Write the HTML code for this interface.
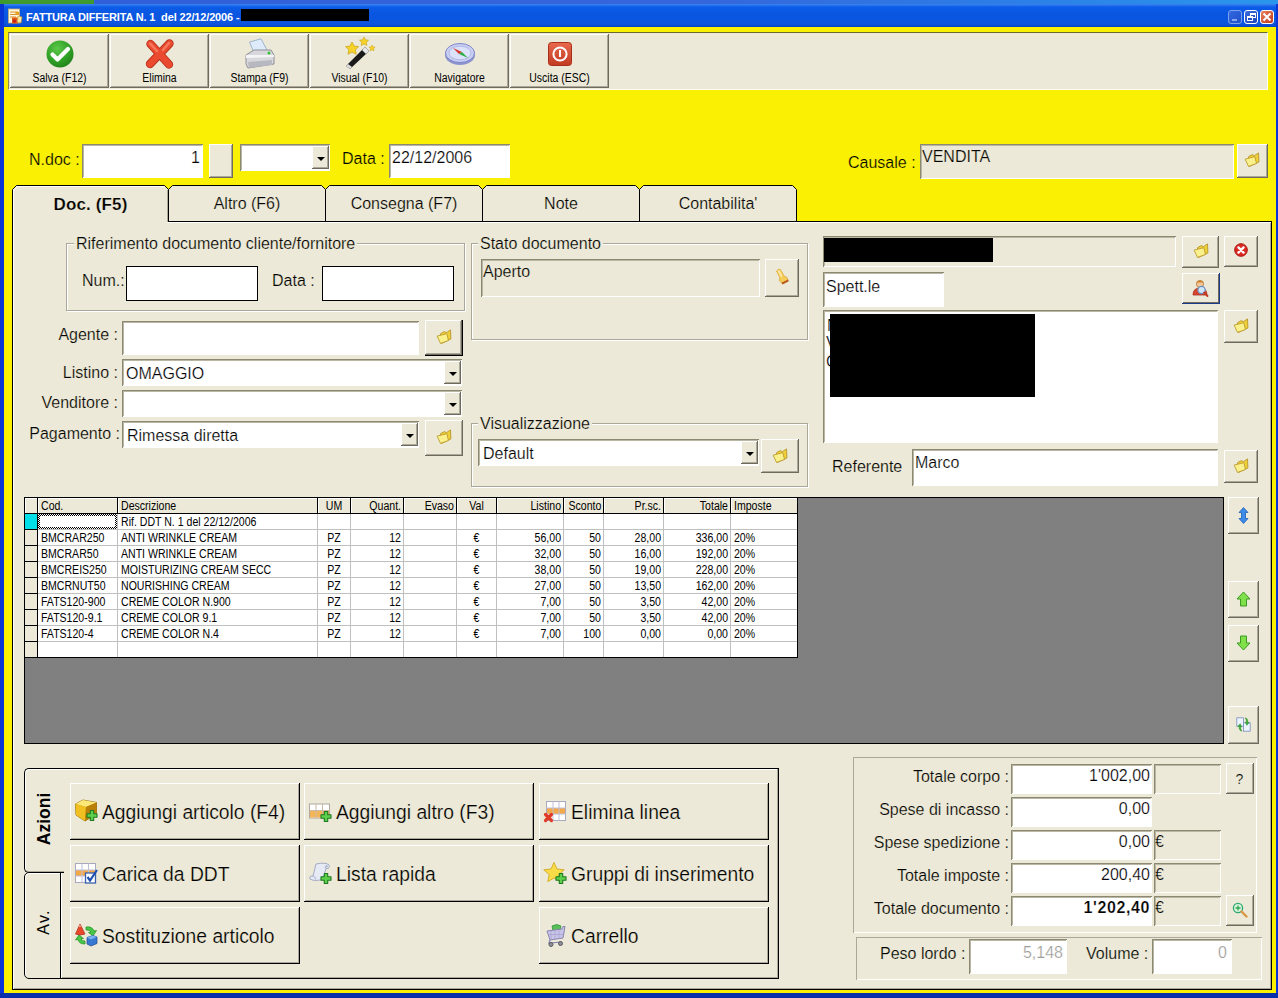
<!DOCTYPE html>
<html>
<head>
<meta charset="utf-8">
<title>FATTURA DIFFERITA</title>
<style>
html,body{margin:0;padding:0;}
body{width:1278px;height:998px;overflow:hidden;position:relative;background:#FAF004;font-family:"Liberation Sans",sans-serif;font-size:16px;color:#000;-webkit-text-stroke:0.22px #ECE9D8;}
.w{-webkit-text-stroke-color:#fff;}
.y{-webkit-text-stroke-color:#FAF004;}
.ns,.g,.tb span{-webkit-text-stroke-width:0 !important;}
.a{position:absolute;box-sizing:border-box;}
.bg{background:#ECE9D8;}
/* raised button */
.btn{position:absolute;box-sizing:border-box;background:#ECE9D8;box-shadow:inset -1px -1px 0 #6E6B5E,inset 1px 1px 0 #FFFFFF,inset -2px -2px 0 #ACA899;}
/* sunken field */
.sk{position:absolute;box-sizing:border-box;background:#fff;box-shadow:inset 1px 1px 0 #8C8973,inset -1px -1px 0 #FFFFFF,inset 2px 2px 0 #B9B6A4;}
.skg{background:#ECE9D8;}
.flat{position:absolute;box-sizing:border-box;background:#fff;border:1px solid #000;}
.lbl{position:absolute;white-space:pre;line-height:20px;height:20px;}
.r{text-align:right;}
.grp{position:absolute;box-sizing:border-box;border:1px solid #ACA899;box-shadow:inset 1px 1px 0 #fff,1px 1px 0 #fff;}
.grp>span{position:absolute;top:-9px;left:6px;background:#ECE9D8;padding:0 2px;line-height:18px;white-space:pre;}
.tb{font-size:12px;}
.tb span{position:absolute;left:0;right:0;top:37px;text-align:center;line-height:14px;transform:scaleX(0.87);white-space:pre;}
.dd{position:absolute;box-sizing:border-box;background:#ECE9D8;box-shadow:inset -1px -1px 0 #6E6B5E,inset 1px 1px 0 #FFFFFF,inset -2px -2px 0 #ACA899;}
.dd:after{content:"";position:absolute;left:50%;top:50%;margin:-1px 0 0 -4px;border:4px solid transparent;border-top:4px solid #000;border-bottom:0;}
.tab{position:absolute;box-sizing:border-box;background:#ECE9D8;border:1px solid #000;border-bottom:0;border-radius:5px 5px 0 0;text-align:center;line-height:33px;}
.g{position:absolute;font-size:12px;line-height:14px;height:14px;white-space:pre;transform:scaleX(0.88);}
.abtn{position:absolute;box-sizing:border-box;width:230px;height:57px;background:#ECE9D8;box-shadow:inset -1px -1px 0 #000,inset 1px 1px 0 #fff,inset -2px -2px 0 #ACA899;}
.abtn svg{display:block;}
</style>
</head>
<body>
<!-- top strip of background windows -->
<div class="a" style="left:0;top:0;width:1278px;height:4px;background:linear-gradient(90deg,#2F5FD9 0,#3566DB 700px,#2C7FE6 1020px,#2A96EC 1278px);"></div>
<div class="a" style="left:0;top:0;width:94px;height:4px;background:#3E9A2E;"></div>
<!-- title bar -->
<div class="a" style="left:0;top:4px;width:1278px;height:23px;background:linear-gradient(180deg,#3D86F2 0,#0C5CE8 3px,#0A56E0 10px,#0B55DF 19px,#0A4FD2 22px,#083CA8 23px);"></div>
<div class="lbl ns" style="left:26px;top:9px;font-size:11px;font-weight:bold;color:#fff;line-height:16px;height:16px;letter-spacing:-0.15px;">FATTURA DIFFERITA N. 1  del 22/12/2006 -</div>
<div class="a" style="left:241px;top:9px;width:128px;height:12px;background:#000;"></div>
<svg class="a" style="left:7px;top:8px" width="16" height="17" viewBox="0 0 16 17"><rect x="1.5" y="1" width="11" height="14" fill="#FFF7D8" stroke="#C8B070" stroke-width="0.8"/><path d="M3 4 h8 M3 6.5 h8 M3 9 h6" stroke="#D89030" stroke-width="1.2"/><path d="M8 4 h4 v3 h-3z" fill="#E8A020"/><rect x="5" y="9.5" width="6" height="6" fill="#E05A18"/><path d="M11 8 L15 9 L14 15 L10 14Z" fill="#F8E8A0" stroke="#C89030" stroke-width="0.6"/><circle cx="7.5" cy="13" r="1.8" fill="#C82818"/></svg>
<!-- caption buttons -->
<div class="a" style="left:1228px;top:10px;width:14px;height:14px;border:1px solid #8FB0F0;border-radius:3px;background:linear-gradient(135deg,#3A6CE0,#2450C8);opacity:0.85;"><div class="a" style="left:3px;top:8px;width:5px;height:2px;background:#9FB8F0;"></div></div>
<div class="a" style="left:1244px;top:10px;width:14px;height:14px;border:1px solid #fff;border-radius:3px;background:linear-gradient(135deg,#3A6CE0,#1C44B8);"><div class="a" style="left:5px;top:2px;width:6px;height:5px;border:1px solid #fff;border-top:2px solid #fff;"></div><div class="a" style="left:2px;top:5px;width:6px;height:5px;border:1px solid #fff;border-top:2px solid #fff;background:#2450C8;"></div></div>
<div class="a" style="left:1260px;top:10px;width:14px;height:14px;border:1px solid #fff;border-radius:3px;background:linear-gradient(135deg,#E8825E,#C03A1A);"><svg class="a" style="left:0;top:0" width="12" height="12" viewBox="0 0 12 12"><path d="M2.5 2.5 L9.5 9.5 M9.5 2.5 L2.5 9.5" stroke="#fff" stroke-width="2"/></svg></div>
<!-- window borders -->
<div class="a" style="left:0;top:4px;width:4px;height:994px;background:#0A35D6;"></div>
<div class="a" style="left:1276px;top:4px;width:2px;height:994px;background:#0A35D6;"></div>
<div class="a" style="left:0;top:993px;width:1278px;height:5px;background:#0A2FA8;"></div>

<!-- toolbar panel -->
<div class="a bg" style="left:8px;top:32px;width:1260px;height:58px;border-top:1px solid #6B682E;border-left:1px solid #8E8B4A;border-right:1px solid #FFFDF0;border-bottom:1px solid #FFFDF0;"></div>


<!-- toolbar buttons -->
<div class="btn tb" style="left:10px;top:34px;width:99px;height:54px;">
<svg class="a" style="left:36px;top:6px" width="28" height="28" viewBox="0 0 28 28"><defs><radialGradient id="g1" cx="0.4" cy="0.3" r="0.8"><stop offset="0" stop-color="#5CC84A"/><stop offset="0.6" stop-color="#2E9E24"/><stop offset="1" stop-color="#1C7A18"/></radialGradient></defs><circle cx="14" cy="14" r="13.5" fill="url(#g1)"/><path d="M6.5 14.5 L11.5 19.5 L22 9" fill="none" stroke="#fff" stroke-width="4.2" stroke-linecap="round" stroke-linejoin="round"/></svg>
<span>Salva (F12)</span></div>
<div class="btn tb" style="left:110px;top:34px;width:99px;height:54px;">
<svg class="a" style="left:35px;top:5px" width="30" height="30" viewBox="0 0 30 30"><path d="M5.5 5 L24 25.5 M24.5 4.5 L5 25" stroke="#B8301A" stroke-width="8.4" stroke-linecap="round" fill="none"/><path d="M5.5 5 L24 25.5 M24.5 4.5 L5 25" stroke="#EA4A30" stroke-width="6.6" stroke-linecap="round" fill="none"/><path d="M5 4.5 L12 12 M24 4 L18 11" stroke="#F47A5E" stroke-width="2.5" stroke-linecap="round" fill="none"/></svg>
<span>Elimina</span></div>
<div class="btn tb" style="left:210px;top:34px;width:99px;height:54px;">
<svg class="a" style="left:34px;top:4px" width="32" height="32" viewBox="0 0 32 32"><path d="M5.5 4 L17 0.8 L23.5 13 L10.5 16 Z" fill="#DDEBFA" stroke="#9FB4CC" stroke-width="1"/><path d="M2 17 L10 12 L27 12 L30 17 L30 26 L4 30 L2 26 Z" fill="#D8D8DC" stroke="#8E8E96" stroke-width="1"/><path d="M2 17 L30 17 L30 19 L2 20Z" fill="#F4F4F6"/><path d="M4 24 L28 22 L28 27 L5 30 Z" fill="#B8B8C0"/><circle cx="25" cy="15" r="1.5" fill="#35C435"/></svg>
<span>Stampa (F9)</span></div>
<div class="btn tb" style="left:310px;top:34px;width:99px;height:54px;">
<svg class="a" style="left:33px;top:2px" width="34" height="34" viewBox="0 0 34 34"><path d="M3 30 L7 33 L24 17 L20 13 Z" fill="#1A1A1A"/><path d="M19 14 L23 18 L26 15 L22 11 Z" fill="#E8E8E8" stroke="#888" stroke-width="0.6"/><path d="M3 30 L7 33 L9 31 L5 28Z" fill="#DDD"/><path d="M9 6 l2.2 4 4.5 .6 -3.3 3.2 .8 4.5 -4.2 -2.2 -4 2.2 .8 -4.5 -3.3 -3.2 4.5 -.6z" fill="#F6D32A" stroke="#C9A010" stroke-width="0.7"/><path d="M21 1 l1.5 2.8 3.1 .4 -2.3 2.2 .6 3.1 -2.9 -1.5 -2.8 1.5 .6 -3.1 -2.3 -2.2 3.1 -.4z" fill="#F6D32A" stroke="#C9A010" stroke-width="0.6"/><path d="M29 9 l1 1.9 2.1 .3 -1.5 1.5 .4 2.1 -2 -1 -1.9 1 .4 -2.1 -1.5 -1.5 2.1 -.3z" fill="#F6D32A" stroke="#C9A010" stroke-width="0.5"/></svg>
<span>Visual (F10)</span></div>
<div class="btn tb" style="left:410px;top:34px;width:99px;height:54px;">
<svg class="a" style="left:34px;top:8px" width="32" height="24" viewBox="0 0 32 24"><ellipse cx="16" cy="13" rx="15" ry="10" fill="#8C93CF"/><ellipse cx="16" cy="11" rx="14.5" ry="9.5" fill="#C9CFF2" stroke="#7E86C8" stroke-width="1"/><ellipse cx="16" cy="11" rx="11" ry="6.8" fill="#DCE2FA" stroke="#A9B0E2" stroke-width="0.8"/><path d="M9 6 L18 10 L15 12 Z" fill="#D8352A"/><path d="M24 16 L18 10 L15 12 Z" fill="#2FAE46"/></svg>
<span>Navigatore</span></div>
<div class="btn tb" style="left:510px;top:34px;width:99px;height:54px;">
<svg class="a" style="left:38px;top:8px" width="24" height="24" viewBox="0 0 24 24"><defs><linearGradient id="g6" x1="0" y1="0" x2="0" y2="1"><stop offset="0" stop-color="#E8694E"/><stop offset="1" stop-color="#C23A22"/></linearGradient></defs><rect x="0.5" y="0.5" width="23" height="23" rx="3" fill="url(#g6)" stroke="#A82E1A"/><circle cx="12" cy="12" r="6.6" fill="none" stroke="#fff" stroke-width="2"/><rect x="11" y="8" width="2" height="7" fill="#fff"/></svg>
<span>Uscita (ESC)</span></div>


<!-- N.doc row -->
<div class="lbl y" style="left:29px;top:150px;">N.doc :</div>
<div class="sk" style="left:82px;top:144px;width:121px;height:34px;"></div>
<div class="lbl r w" style="left:90px;top:148px;width:110px;">1</div>
<div class="btn" style="left:209px;top:144px;width:24px;height:34px;"></div>
<div class="sk" style="left:240px;top:144px;width:90px;height:27px;"></div>
<div class="dd" style="left:312px;top:146px;width:17px;height:23px;"></div>
<div class="lbl y" style="left:342px;top:149px;">Data :</div>
<div class="sk" style="left:389px;top:144px;width:121px;height:34px;"></div>
<div class="lbl w" style="left:392px;top:148px;">22/12/2006</div>
<div class="lbl y" style="left:848px;top:153px;">Causale :</div>
<div class="sk skg" style="left:920px;top:144px;width:314px;height:35px;"></div>
<div class="lbl" style="left:922px;top:147px;">VENDITA</div>
<div class="btn" style="left:1237px;top:144px;width:31px;height:34px;"><svg class="a" style="left:7px;top:8px" width="16" height="16" viewBox="0 0 16 16"><path d="M4.5 4.7 L8.3 2.6 L10.4 3.7 L14.5 0.9 L14.9 10 L5.3 14.6 Z" fill="#EFCF38" stroke="#B8962A" stroke-width="0.9" stroke-linejoin="round"/><path d="M1.1 7.1 L10.8 4.7 L12.5 11.5 L4.5 14.4 Z" fill="#FAF08C" stroke="#BC9C30" stroke-width="0.9" stroke-linejoin="round"/></svg></div>

<!-- tabs -->
<div class="a bg" style="left:12px;top:221px;width:1260px;height:769px;border:1px solid #000;box-shadow:inset 1px 1px 0 #fff,inset -1px -1px 0 #ACA899;"></div>
<svg class="a" style="left:12px;top:185px" width="786" height="38" viewBox="0 0 786 38"><path d="M0.5 37 L0.5 4.5 L4.5 0.5 L152.5 0.5 L156.5 4.5 L156.5 37 Z" fill="#ECE9D8" stroke="none"/><path d="M156.5 37 L156.5 4.5 L160.5 0.5 L309.5 0.5 L313.5 4.5 L313.5 37 Z" fill="#ECE9D8" stroke="none"/><path d="M313.5 37 L313.5 4.5 L317.5 0.5 L466.5 0.5 L470.5 4.5 L470.5 37 Z" fill="#ECE9D8" stroke="none"/><path d="M470.5 37 L470.5 4.5 L474.5 0.5 L623.5 0.5 L627.5 4.5 L627.5 37 Z" fill="#ECE9D8" stroke="none"/><path d="M627.5 37 L627.5 4.5 L631.5 0.5 L780.5 0.5 L784.5 4.5 L784.5 37 Z" fill="#ECE9D8" stroke="none"/><path d="M0.5 37 L0.5 4.5 L4.5 0.5 L152.5 0.5 L156.5 4.5 L156.5 37" fill="none" stroke="#000" stroke-width="1"/><path d="M156.5 37 L156.5 4.5 L160.5 0.5 L309.5 0.5 L313.5 4.5 L313.5 37" fill="none" stroke="#000" stroke-width="1"/><path d="M313.5 37 L313.5 4.5 L317.5 0.5 L466.5 0.5 L470.5 4.5 L470.5 37" fill="none" stroke="#000" stroke-width="1"/><path d="M470.5 37 L470.5 4.5 L474.5 0.5 L623.5 0.5 L627.5 4.5 L627.5 37" fill="none" stroke="#000" stroke-width="1"/><path d="M627.5 37 L627.5 4.5 L631.5 0.5 L780.5 0.5 L784.5 4.5 L784.5 37" fill="none" stroke="#000" stroke-width="1"/><path d="M156.5 36.5 L785 36.5" stroke="#000" stroke-width="1"/><path d="M157 37.5 L786 37.5" stroke="#fff" stroke-width="1"/><path d="M1.5 37 L1.5 5 L4.9 1.5 L152 1.5" fill="none" stroke="#fff" stroke-width="1"/><path d="M155.5 5 L155.5 37" fill="none" stroke="#ACA899" stroke-width="1"/></svg>
<div class="a bg" style="left:14px;top:221px;width:153px;height:3px;"></div>
<div class="lbl" style="left:12.5px;width:156px;text-align:center;top:195px;font-weight:bold;font-size:17px;letter-spacing:0.15px;">Doc. (F5)</div>
<div class="lbl" style="left:169.0px;width:156px;text-align:center;top:194px;">Altro (F6)</div>
<div class="lbl" style="left:326.0px;width:156px;text-align:center;top:194px;">Consegna (F7)</div>
<div class="lbl" style="left:483.0px;width:156px;text-align:center;top:194px;">Note</div>
<div class="lbl" style="left:640.0px;width:156px;text-align:center;top:194px;">Contabilita'</div>

<!-- left form -->
<div class="grp" style="left:66px;top:243px;width:399px;height:68px;"><span style="left:7px;">Riferimento documento cliente/fornitore</span></div>
<div class="lbl" style="left:82px;top:271px;">Num.:</div>
<div class="flat" style="left:126px;top:266px;width:132px;height:35px;"></div>
<div class="lbl" style="left:272px;top:271px;">Data :</div>
<div class="flat" style="left:322px;top:266px;width:132px;height:35px;"></div>

<div class="lbl r" style="left:20px;top:325px;width:98px;">Agente :</div>
<div class="sk" style="left:122px;top:321px;width:297px;height:34px;"></div>
<div class="btn" style="left:425px;top:320px;width:38px;height:36px;border-bottom:1px solid #000;border-right:1px solid #000;"><svg class="a" style="left:11px;top:9px" width="16" height="16" viewBox="0 0 16 16"><path d="M4.5 4.7 L8.3 2.6 L10.4 3.7 L14.5 0.9 L14.9 10 L5.3 14.6 Z" fill="#EFCF38" stroke="#B8962A" stroke-width="0.9" stroke-linejoin="round"/><path d="M1.1 7.1 L10.8 4.7 L12.5 11.5 L4.5 14.4 Z" fill="#FAF08C" stroke="#BC9C30" stroke-width="0.9" stroke-linejoin="round"/></svg></div>
<div class="lbl r" style="left:20px;top:363px;width:98px;">Listino :</div>
<div class="sk" style="left:122px;top:359px;width:340px;height:27px;"></div>
<div class="lbl w" style="left:126px;top:364px;">OMAGGIO</div>
<div class="dd" style="left:444px;top:361px;width:17px;height:23px;"></div>
<div class="lbl r" style="left:20px;top:393px;width:98px;">Venditore :</div>
<div class="sk" style="left:122px;top:390px;width:340px;height:27px;"></div>
<div class="dd" style="left:444px;top:392px;width:17px;height:23px;"></div>
<div class="lbl r" style="left:20px;top:424px;width:100px;">Pagamento :</div>
<div class="sk" style="left:122px;top:421px;width:297px;height:27px;"></div>
<div class="lbl w" style="left:127px;top:426px;">Rimessa diretta</div>
<div class="dd" style="left:401px;top:423px;width:17px;height:23px;"></div>
<div class="btn" style="left:425px;top:420px;width:38px;height:36px;"><svg class="a" style="left:11px;top:9px" width="16" height="16" viewBox="0 0 16 16"><path d="M4.5 4.7 L8.3 2.6 L10.4 3.7 L14.5 0.9 L14.9 10 L5.3 14.6 Z" fill="#EFCF38" stroke="#B8962A" stroke-width="0.9" stroke-linejoin="round"/><path d="M1.1 7.1 L10.8 4.7 L12.5 11.5 L4.5 14.4 Z" fill="#FAF08C" stroke="#BC9C30" stroke-width="0.9" stroke-linejoin="round"/></svg></div>

<!-- middle -->
<div class="grp" style="left:471px;top:243px;width:337px;height:97px;"><span>Stato documento</span></div>
<div class="sk skg" style="left:481px;top:259px;width:279px;height:38px;"></div>
<div class="lbl" style="left:483px;top:262px;">Aperto</div>
<div class="btn" style="left:765px;top:259px;width:34px;height:38px;"><svg class="a" style="left:10px;top:9px" width="15" height="17" viewBox="0 0 15 17"><path d="M1.5 3 Q3 0.5 5.5 1.5 L9 8 L12 9.5 L13 12 L7 15.5 L4 12 L5 10 Z" fill="#F4CC58" stroke="#D8A030" stroke-width="0.7"/><path d="M2.5 3 Q3.5 2 5 2.5 L7.5 8 L6 9.5Z" fill="#FBE8A0"/><path d="M6.5 14.8 L13 11.5 L13.8 13.3 L7.6 16.6Z" fill="#B8581A"/></svg></div>
<div class="grp" style="left:471px;top:423px;width:337px;height:64px;"><span>Visualizzazione</span></div>
<div class="sk" style="left:478px;top:439px;width:281px;height:27px;"></div>
<div class="lbl w" style="left:483px;top:444px;">Default</div>
<div class="dd" style="left:741px;top:441px;width:17px;height:23px;"></div>
<div class="btn" style="left:761px;top:439px;width:38px;height:34px;"><svg class="a" style="left:11px;top:9px" width="16" height="16" viewBox="0 0 16 16"><path d="M4.5 4.7 L8.3 2.6 L10.4 3.7 L14.5 0.9 L14.9 10 L5.3 14.6 Z" fill="#EFCF38" stroke="#B8962A" stroke-width="0.9" stroke-linejoin="round"/><path d="M1.1 7.1 L10.8 4.7 L12.5 11.5 L4.5 14.4 Z" fill="#FAF08C" stroke="#BC9C30" stroke-width="0.9" stroke-linejoin="round"/></svg></div>

<!-- right -->
<div class="sk skg" style="left:823px;top:236px;width:353px;height:31px;"></div>
<div class="a" style="left:824px;top:238px;width:169px;height:24px;background:#000;"></div>
<div class="btn" style="left:1182px;top:236px;width:37px;height:32px;"><svg class="a" style="left:11px;top:7px" width="16" height="16" viewBox="0 0 16 16"><path d="M4.5 4.7 L8.3 2.6 L10.4 3.7 L14.5 0.9 L14.9 10 L5.3 14.6 Z" fill="#EFCF38" stroke="#B8962A" stroke-width="0.9" stroke-linejoin="round"/><path d="M1.1 7.1 L10.8 4.7 L12.5 11.5 L4.5 14.4 Z" fill="#FAF08C" stroke="#BC9C30" stroke-width="0.9" stroke-linejoin="round"/></svg></div>
<div class="btn" style="left:1224px;top:236px;width:34px;height:31px;"><svg class="a" style="left:9px;top:6px" width="16" height="16" viewBox="0 0 16 16"><circle cx="8" cy="8" r="6.3" fill="#DD2A22" stroke="#A8150F" stroke-width="1"/><path d="M5.4 5.4 L10.6 10.6 M10.6 5.4 L5.4 10.6" stroke="#fff" stroke-width="2.3" stroke-linecap="round"/></svg></div>
<div class="sk" style="left:823px;top:272px;width:121px;height:35px;"></div>
<div class="lbl w" style="left:826px;top:277px;">Spett.le</div>
<div class="btn" style="left:1182px;top:273px;width:38px;height:31px;box-shadow:inset -1px -1px 0 #1C3A8C,inset 1px 1px 0 #FFFFFF,inset -2px -2px 0 #6E6B5E;"><svg class="a" style="left:9px;top:6px" width="18" height="18" viewBox="0 0 18 18"><circle cx="9" cy="5" r="3.6" fill="#F2C79A" stroke="#B9742F" stroke-width="0.8"/><path d="M5.6 4 Q9 -0.5 12.4 4 Q9 2.5 5.6 4Z" fill="#C8781E"/><path d="M2 16 Q2 9 9 9 Q16 9 16 16 Z" fill="#D8452E" stroke="#A82E1A" stroke-width="0.8"/><circle cx="10.5" cy="11" r="3.6" fill="#CFE6FA" stroke="#6D8FC0" stroke-width="1.2"/><path d="M13 13.6 L16.5 17" stroke="#C23A22" stroke-width="1.8" stroke-linecap="round"/></svg></div>
<div class="sk" style="left:823px;top:310px;width:395px;height:133px;"></div>
<div class="lbl w" style="left:827px;top:316px;">N</div>
<div class="lbl w" style="left:826px;top:333px;">V</div>
<div class="lbl w" style="left:826px;top:352px;">C</div>
<div class="a" style="left:830px;top:314px;width:205px;height:83px;background:#000;"></div>
<div class="btn" style="left:1224px;top:310px;width:34px;height:33px;"><svg class="a" style="left:9px;top:8px" width="16" height="16" viewBox="0 0 16 16"><path d="M4.5 4.7 L8.3 2.6 L10.4 3.7 L14.5 0.9 L14.9 10 L5.3 14.6 Z" fill="#EFCF38" stroke="#B8962A" stroke-width="0.9" stroke-linejoin="round"/><path d="M1.1 7.1 L10.8 4.7 L12.5 11.5 L4.5 14.4 Z" fill="#FAF08C" stroke="#BC9C30" stroke-width="0.9" stroke-linejoin="round"/></svg></div>
<div class="lbl" style="left:832px;top:457px;">Referente</div>
<div class="sk" style="left:912px;top:449px;width:306px;height:37px;"></div>
<div class="lbl w" style="left:915px;top:453px;">Marco</div>
<div class="btn" style="left:1224px;top:450px;width:34px;height:33px;"><svg class="a" style="left:9px;top:8px" width="16" height="16" viewBox="0 0 16 16"><path d="M4.5 4.7 L8.3 2.6 L10.4 3.7 L14.5 0.9 L14.9 10 L5.3 14.6 Z" fill="#EFCF38" stroke="#B8962A" stroke-width="0.9" stroke-linejoin="round"/><path d="M1.1 7.1 L10.8 4.7 L12.5 11.5 L4.5 14.4 Z" fill="#FAF08C" stroke="#BC9C30" stroke-width="0.9" stroke-linejoin="round"/></svg></div>

<!-- grid -->
<div class="a" style="left:24px;top:497px;width:1200px;height:247px;background:#808080;border:1px solid #000;"></div>
<div class="a" style="left:25px;top:498px;width:773px;height:160px;background:#fff;"></div>
<div class="a bg" style="left:25px;top:498px;width:773px;height:16px;border-bottom:1px solid #000;"></div>
<div class="a bg" style="left:25px;top:514px;width:13px;height:144px;border-right:1px solid #000;"></div>
<div class="a" style="left:37px;top:498px;width:1px;height:15px;background:#000;z-index:2;"></div>
<div class="a" style="left:117px;top:498px;width:1px;height:15px;background:#000;z-index:2;"></div>
<div class="g" style="top:499px;left:41px;transform-origin:0 50%;">Cod.</div>
<div class="a" style="left:317px;top:498px;width:1px;height:15px;background:#000;z-index:2;"></div>
<div class="g" style="top:499px;left:121px;transform-origin:0 50%;">Descrizione</div>
<div class="a" style="left:350px;top:498px;width:1px;height:15px;background:#000;z-index:2;"></div>
<div class="g" style="top:499px;left:318px;width:32px;text-align:center;">UM</div>
<div class="a" style="left:403px;top:498px;width:1px;height:15px;background:#000;z-index:2;"></div>
<div class="g" style="top:499px;left:351px;width:50px;text-align:right;transform-origin:100% 50%;">Quant.</div>
<div class="a" style="left:456px;top:498px;width:1px;height:15px;background:#000;z-index:2;"></div>
<div class="g" style="top:499px;left:404px;width:50px;text-align:right;transform-origin:100% 50%;">Evaso</div>
<div class="a" style="left:496px;top:498px;width:1px;height:15px;background:#000;z-index:2;"></div>
<div class="g" style="top:499px;left:457px;width:39px;text-align:center;">Val</div>
<div class="a" style="left:563px;top:498px;width:1px;height:15px;background:#000;z-index:2;"></div>
<div class="g" style="top:499px;left:497px;width:64px;text-align:right;transform-origin:100% 50%;">Listino</div>
<div class="a" style="left:603px;top:498px;width:1px;height:15px;background:#000;z-index:2;"></div>
<div class="g" style="top:499px;left:564px;width:37px;text-align:right;transform-origin:100% 50%;">Sconto</div>
<div class="a" style="left:663px;top:498px;width:1px;height:15px;background:#000;z-index:2;"></div>
<div class="g" style="top:499px;left:604px;width:57px;text-align:right;transform-origin:100% 50%;">Pr.sc.</div>
<div class="a" style="left:730px;top:498px;width:1px;height:15px;background:#000;z-index:2;"></div>
<div class="g" style="top:499px;left:664px;width:64px;text-align:right;transform-origin:100% 50%;">Totale</div>
<div class="a" style="left:797px;top:498px;width:1px;height:15px;background:#000;z-index:2;"></div>
<div class="g" style="top:499px;left:734px;transform-origin:0 50%;">Imposte</div>
<div class="a" style="left:117px;top:514px;width:1px;height:144px;background:#C0C0C0;"></div>
<div class="a" style="left:317px;top:514px;width:1px;height:144px;background:#C0C0C0;"></div>
<div class="a" style="left:350px;top:514px;width:1px;height:144px;background:#C0C0C0;"></div>
<div class="a" style="left:403px;top:514px;width:1px;height:144px;background:#C0C0C0;"></div>
<div class="a" style="left:456px;top:514px;width:1px;height:144px;background:#C0C0C0;"></div>
<div class="a" style="left:496px;top:514px;width:1px;height:144px;background:#C0C0C0;"></div>
<div class="a" style="left:563px;top:514px;width:1px;height:144px;background:#C0C0C0;"></div>
<div class="a" style="left:603px;top:514px;width:1px;height:144px;background:#C0C0C0;"></div>
<div class="a" style="left:663px;top:514px;width:1px;height:144px;background:#C0C0C0;"></div>
<div class="a" style="left:730px;top:514px;width:1px;height:144px;background:#C0C0C0;"></div>
<div class="a" style="left:797px;top:514px;width:1px;height:144px;background:#C0C0C0;"></div>
<div class="a" style="left:38px;top:529px;width:760px;height:1px;background:#C0C0C0;"></div>
<div class="a" style="left:25px;top:529px;width:13px;height:1px;background:#000;"></div>
<div class="a" style="left:38px;top:545px;width:760px;height:1px;background:#C0C0C0;"></div>
<div class="a" style="left:25px;top:545px;width:13px;height:1px;background:#000;"></div>
<div class="a" style="left:38px;top:561px;width:760px;height:1px;background:#C0C0C0;"></div>
<div class="a" style="left:25px;top:561px;width:13px;height:1px;background:#000;"></div>
<div class="a" style="left:38px;top:577px;width:760px;height:1px;background:#C0C0C0;"></div>
<div class="a" style="left:25px;top:577px;width:13px;height:1px;background:#000;"></div>
<div class="a" style="left:38px;top:593px;width:760px;height:1px;background:#C0C0C0;"></div>
<div class="a" style="left:25px;top:593px;width:13px;height:1px;background:#000;"></div>
<div class="a" style="left:38px;top:609px;width:760px;height:1px;background:#C0C0C0;"></div>
<div class="a" style="left:25px;top:609px;width:13px;height:1px;background:#000;"></div>
<div class="a" style="left:38px;top:625px;width:760px;height:1px;background:#C0C0C0;"></div>
<div class="a" style="left:25px;top:625px;width:13px;height:1px;background:#000;"></div>
<div class="a" style="left:38px;top:641px;width:760px;height:1px;background:#C0C0C0;"></div>
<div class="a" style="left:25px;top:641px;width:13px;height:1px;background:#000;"></div>
<div class="a" style="left:38px;top:657px;width:760px;height:1px;background:#C0C0C0;"></div>
<div class="a" style="left:25px;top:657px;width:13px;height:1px;background:#000;"></div>
<div class="g w" style="top:515px;left:121px;transform-origin:0 50%;">Rif. DDT N. 1 del 22/12/2006</div>
<div class="g w" style="top:531px;left:41px;transform-origin:0 50%;">BMCRAR250</div>
<div class="g w" style="top:531px;left:121px;transform-origin:0 50%;">ANTI WRINKLE CREAM</div>
<div class="g w" style="top:531px;left:318px;width:32px;text-align:center;">PZ</div>
<div class="g w" style="top:531px;left:351px;width:50px;text-align:right;transform-origin:100% 50%;">12</div>
<div class="g w" style="top:531px;left:457px;width:39px;text-align:center;">€</div>
<div class="g w" style="top:531px;left:497px;width:64px;text-align:right;transform-origin:100% 50%;">56,00</div>
<div class="g w" style="top:531px;left:564px;width:37px;text-align:right;transform-origin:100% 50%;">50</div>
<div class="g w" style="top:531px;left:604px;width:57px;text-align:right;transform-origin:100% 50%;">28,00</div>
<div class="g w" style="top:531px;left:664px;width:64px;text-align:right;transform-origin:100% 50%;">336,00</div>
<div class="g w" style="top:531px;left:734px;transform-origin:0 50%;">20%</div>
<div class="g w" style="top:547px;left:41px;transform-origin:0 50%;">BMCRAR50</div>
<div class="g w" style="top:547px;left:121px;transform-origin:0 50%;">ANTI WRINKLE CREAM</div>
<div class="g w" style="top:547px;left:318px;width:32px;text-align:center;">PZ</div>
<div class="g w" style="top:547px;left:351px;width:50px;text-align:right;transform-origin:100% 50%;">12</div>
<div class="g w" style="top:547px;left:457px;width:39px;text-align:center;">€</div>
<div class="g w" style="top:547px;left:497px;width:64px;text-align:right;transform-origin:100% 50%;">32,00</div>
<div class="g w" style="top:547px;left:564px;width:37px;text-align:right;transform-origin:100% 50%;">50</div>
<div class="g w" style="top:547px;left:604px;width:57px;text-align:right;transform-origin:100% 50%;">16,00</div>
<div class="g w" style="top:547px;left:664px;width:64px;text-align:right;transform-origin:100% 50%;">192,00</div>
<div class="g w" style="top:547px;left:734px;transform-origin:0 50%;">20%</div>
<div class="g w" style="top:563px;left:41px;transform-origin:0 50%;">BMCREIS250</div>
<div class="g w" style="top:563px;left:121px;transform-origin:0 50%;">MOISTURIZING CREAM SECC</div>
<div class="g w" style="top:563px;left:318px;width:32px;text-align:center;">PZ</div>
<div class="g w" style="top:563px;left:351px;width:50px;text-align:right;transform-origin:100% 50%;">12</div>
<div class="g w" style="top:563px;left:457px;width:39px;text-align:center;">€</div>
<div class="g w" style="top:563px;left:497px;width:64px;text-align:right;transform-origin:100% 50%;">38,00</div>
<div class="g w" style="top:563px;left:564px;width:37px;text-align:right;transform-origin:100% 50%;">50</div>
<div class="g w" style="top:563px;left:604px;width:57px;text-align:right;transform-origin:100% 50%;">19,00</div>
<div class="g w" style="top:563px;left:664px;width:64px;text-align:right;transform-origin:100% 50%;">228,00</div>
<div class="g w" style="top:563px;left:734px;transform-origin:0 50%;">20%</div>
<div class="g w" style="top:579px;left:41px;transform-origin:0 50%;">BMCRNUT50</div>
<div class="g w" style="top:579px;left:121px;transform-origin:0 50%;">NOURISHING CREAM</div>
<div class="g w" style="top:579px;left:318px;width:32px;text-align:center;">PZ</div>
<div class="g w" style="top:579px;left:351px;width:50px;text-align:right;transform-origin:100% 50%;">12</div>
<div class="g w" style="top:579px;left:457px;width:39px;text-align:center;">€</div>
<div class="g w" style="top:579px;left:497px;width:64px;text-align:right;transform-origin:100% 50%;">27,00</div>
<div class="g w" style="top:579px;left:564px;width:37px;text-align:right;transform-origin:100% 50%;">50</div>
<div class="g w" style="top:579px;left:604px;width:57px;text-align:right;transform-origin:100% 50%;">13,50</div>
<div class="g w" style="top:579px;left:664px;width:64px;text-align:right;transform-origin:100% 50%;">162,00</div>
<div class="g w" style="top:579px;left:734px;transform-origin:0 50%;">20%</div>
<div class="g w" style="top:595px;left:41px;transform-origin:0 50%;">FATS120-900</div>
<div class="g w" style="top:595px;left:121px;transform-origin:0 50%;">CREME COLOR N.900</div>
<div class="g w" style="top:595px;left:318px;width:32px;text-align:center;">PZ</div>
<div class="g w" style="top:595px;left:351px;width:50px;text-align:right;transform-origin:100% 50%;">12</div>
<div class="g w" style="top:595px;left:457px;width:39px;text-align:center;">€</div>
<div class="g w" style="top:595px;left:497px;width:64px;text-align:right;transform-origin:100% 50%;">7,00</div>
<div class="g w" style="top:595px;left:564px;width:37px;text-align:right;transform-origin:100% 50%;">50</div>
<div class="g w" style="top:595px;left:604px;width:57px;text-align:right;transform-origin:100% 50%;">3,50</div>
<div class="g w" style="top:595px;left:664px;width:64px;text-align:right;transform-origin:100% 50%;">42,00</div>
<div class="g w" style="top:595px;left:734px;transform-origin:0 50%;">20%</div>
<div class="g w" style="top:611px;left:41px;transform-origin:0 50%;">FATS120-9.1</div>
<div class="g w" style="top:611px;left:121px;transform-origin:0 50%;">CREME COLOR 9.1</div>
<div class="g w" style="top:611px;left:318px;width:32px;text-align:center;">PZ</div>
<div class="g w" style="top:611px;left:351px;width:50px;text-align:right;transform-origin:100% 50%;">12</div>
<div class="g w" style="top:611px;left:457px;width:39px;text-align:center;">€</div>
<div class="g w" style="top:611px;left:497px;width:64px;text-align:right;transform-origin:100% 50%;">7,00</div>
<div class="g w" style="top:611px;left:564px;width:37px;text-align:right;transform-origin:100% 50%;">50</div>
<div class="g w" style="top:611px;left:604px;width:57px;text-align:right;transform-origin:100% 50%;">3,50</div>
<div class="g w" style="top:611px;left:664px;width:64px;text-align:right;transform-origin:100% 50%;">42,00</div>
<div class="g w" style="top:611px;left:734px;transform-origin:0 50%;">20%</div>
<div class="g w" style="top:627px;left:41px;transform-origin:0 50%;">FATS120-4</div>
<div class="g w" style="top:627px;left:121px;transform-origin:0 50%;">CREME COLOR N.4</div>
<div class="g w" style="top:627px;left:318px;width:32px;text-align:center;">PZ</div>
<div class="g w" style="top:627px;left:351px;width:50px;text-align:right;transform-origin:100% 50%;">12</div>
<div class="g w" style="top:627px;left:457px;width:39px;text-align:center;">€</div>
<div class="g w" style="top:627px;left:497px;width:64px;text-align:right;transform-origin:100% 50%;">7,00</div>
<div class="g w" style="top:627px;left:564px;width:37px;text-align:right;transform-origin:100% 50%;">100</div>
<div class="g w" style="top:627px;left:604px;width:57px;text-align:right;transform-origin:100% 50%;">0,00</div>
<div class="g w" style="top:627px;left:664px;width:64px;text-align:right;transform-origin:100% 50%;">0,00</div>
<div class="g w" style="top:627px;left:734px;transform-origin:0 50%;">20%</div>
<div class="a" style="left:38px;top:498px;width:1px;height:15px;background:#fff;"></div><div class="a" style="left:118px;top:498px;width:1px;height:15px;background:#fff;"></div><div class="a" style="left:318px;top:498px;width:1px;height:15px;background:#fff;"></div><div class="a" style="left:351px;top:498px;width:1px;height:15px;background:#fff;"></div><div class="a" style="left:404px;top:498px;width:1px;height:15px;background:#fff;"></div><div class="a" style="left:457px;top:498px;width:1px;height:15px;background:#fff;"></div><div class="a" style="left:497px;top:498px;width:1px;height:15px;background:#fff;"></div><div class="a" style="left:564px;top:498px;width:1px;height:15px;background:#fff;"></div><div class="a" style="left:604px;top:498px;width:1px;height:15px;background:#fff;"></div><div class="a" style="left:664px;top:498px;width:1px;height:15px;background:#fff;"></div><div class="a" style="left:731px;top:498px;width:1px;height:15px;background:#fff;"></div><div class="a" style="left:25px;top:498px;width:772px;height:1px;background:#fff;"></div><div class="a" style="left:25px;top:498px;width:1px;height:15px;background:#fff;"></div>
<div class="a" style="left:797px;top:498px;width:1px;height:160px;background:#000;"></div>
<div class="a" style="left:25px;top:657px;width:773px;height:1px;background:#000;"></div>
<div class="a" style="left:798px;top:498px;width:1px;height:160px;background:#808080;"></div>
<div class="a" style="left:25px;top:514px;width:12px;height:15px;background:#00DFE8;"></div>
<div class="a" style="left:38px;top:514px;width:79px;height:15px;background:repeating-conic-gradient(#000 0 25%,#fff 0 50%) 0 0/2px 2px;"></div><div class="a" style="left:40px;top:516px;width:75px;height:11px;background:#fff;"></div>
<div class="btn" style="left:1228px;top:497px;width:31px;height:37px;"><svg class="a" style="left:10px;top:10px" width="11" height="17" viewBox="0 0 11 17"><path d="M5.5 0.5 L10 5.5 L7.5 5.5 L7.5 11.5 L10 11.5 L5.5 16.5 L1 11.5 L3.5 11.5 L3.5 5.5 L1 5.5 Z" fill="#3C8CE8" stroke="#1F5FB8" stroke-width="0.8"/></svg></div>
<div class="btn" style="left:1228px;top:581px;width:31px;height:37px;"><svg class="a" style="left:8px;top:10px" width="15" height="16" viewBox="0 0 15 16"><path d="M7.5 1 L14 8 L10.5 8 L10.5 15 L4.5 15 L4.5 8 L1 8 Z" fill="#7FE04A" stroke="#3E9A22" stroke-width="1"/></svg></div>
<div class="btn" style="left:1228px;top:625px;width:31px;height:37px;"><svg class="a" style="left:8px;top:10px" width="15" height="16" viewBox="0 0 15 16"><path d="M7.5 15 L14 8 L10.5 8 L10.5 1 L4.5 1 L4.5 8 L1 8 Z" fill="#7FE04A" stroke="#3E9A22" stroke-width="1"/></svg></div>
<div class="btn" style="left:1228px;top:706px;width:31px;height:38px;"><svg class="a" style="left:8px;top:11px" width="15" height="15" viewBox="0 0 18 18"><rect x="1" y="1" width="8" height="10" fill="#EEF4FF" stroke="#6D86B8" stroke-width="0.9"/><rect x="9" y="7" width="8" height="10" fill="#EEF4FF" stroke="#6D86B8" stroke-width="0.9"/><path d="M11 1 Q15 2 14 7 L16 6.5 L13 10 L11 6 L12.5 6.5 Q13 3.5 11 1Z" fill="#35B535" stroke="#1E7A1E" stroke-width="0.5"/><path d="M7 17 Q3 16 4 11 L2 11.5 L5 8 L7 12 L5.5 11.5 Q5 14.5 7 17Z" fill="#35B535" stroke="#1E7A1E" stroke-width="0.5"/></svg></div>
<!-- action panel -->
<div class="a bg" style="left:60px;top:768px;width:719px;height:211px;border:1px solid #000;border-left:0;box-shadow:inset -1px -1px 0 #ACA899,inset 0 1px 0 #fff;"></div>
<div class="a bg" style="left:24px;top:872px;width:37px;height:107px;border:1px solid #000;border-radius:5px 0 0 5px;box-shadow:inset 1px 1px 0 #fff;"></div>
<div class="a bg" style="left:24px;top:768px;width:40px;height:105px;border:1px solid #000;border-right:0;border-radius:5px 0 0 5px;box-shadow:inset 1px 1px 0 #fff,inset 0 -1px 0 #ACA899;"></div>
<div class="a" style="left:60px;top:873px;width:1px;height:105px;background:#000;"></div>
<div class="a" style="left:61px;top:873px;width:1px;height:105px;background:#fff;"></div>
<div class="a" style="left:24px;top:768px;width:40px;height:105px;"><div style="position:absolute;left:20px;top:50.5px;width:0;height:0;"><div class="ns" style="position:absolute;transform:translate(-50%,-50%) rotate(-90deg);white-space:pre;font-weight:bold;font-size:17.5px;line-height:18px;">Azioni</div></div></div>
<div class="a" style="left:25px;top:872px;width:37px;height:107px;"><div style="position:absolute;left:18.5px;top:49.5px;width:0;height:0;"><div class="ns" style="position:absolute;transform:translate(-50%,-50%) rotate(-90deg);white-space:pre;font-size:16px;line-height:18px;letter-spacing:1.2px;">Av.</div></div></div>
<div class="abtn" style="left:70px;top:783px;"><div class="a" style="left:4px;top:16px;width:24px;height:24px;"><svg width="24" height="24" viewBox="0 0 24 24"><path d="M1.5 5 L9 1 L22.5 3.5 L22.5 15 L11 22 L2 16 Z" fill="#C89010" stroke="#8A6208" stroke-width="0.8" stroke-linejoin="round"/><path d="M1.5 5 L9 1 L22.5 3.5 L12 8Z" fill="#FBE878"/><path d="M1.5 5 L12 8 L11 22 L2 16Z" fill="#F0C020"/><path d="M12 8 L22.5 3.5 L22.5 15 L11 22Z" fill="#B88008"/><path d="M16.3 11.5 h3.4 v3.3 h3.3 v3.4 h-3.3 v3.3 h-3.4 v-3.3 h-3.3 v-3.4 h3.3z" fill="#5CD04C" stroke="#1E7A1E" stroke-width="1.1" stroke-linejoin="round"/></svg></div><div class="lbl" style="left:32px;top:19px;font-size:19.3px;line-height:22px;height:22px;">Aggiungi articolo (F4)</div></div>
<div class="abtn" style="left:304px;top:783px;"><div class="a" style="left:4px;top:16px;width:24px;height:24px;"><svg width="24" height="24" viewBox="0 0 24 24"><rect x="1.5" y="5" width="20" height="14" fill="#fff" stroke="#B0A8A0" stroke-width="1"/><rect x="2" y="12" width="19" height="6.5" fill="#F4B458"/><path d="M8 5 v14 M14.5 5 v14 M1.5 11.5 h20" stroke="#C8B8A8" stroke-width="1"/><path d="M16.3 12.5 h3.4 v3.3 h3.3 v3.4 h-3.3 v3.3 h-3.4 v-3.3 h-3.3 v-3.4 h3.3z" fill="#5CD04C" stroke="#1E7A1E" stroke-width="1.1" stroke-linejoin="round"/></svg></div><div class="lbl" style="left:32px;top:19px;font-size:19.3px;line-height:22px;height:22px;">Aggiungi altro (F3)</div></div>
<div class="abtn" style="left:539px;top:783px;"><div class="a" style="left:4px;top:16px;width:24px;height:24px;"><svg width="24" height="24" viewBox="0 0 24 24"><rect x="3.5" y="2.5" width="19" height="19" fill="#fff" stroke="#A8A8C0" stroke-width="1"/><rect x="4" y="9" width="18" height="6" fill="#F4A848"/><path d="M10 2.5 v19 M16 2.5 v19 M3.5 9 h19 M3.5 15 h19" stroke="#C0C0D8" stroke-width="1"/><path d="M2.5 15.5 L8.5 21.5 M8.5 15.5 L2.5 21.5" stroke="#E03A28" stroke-width="3.2" stroke-linecap="round"/></svg></div><div class="lbl" style="left:32px;top:19px;font-size:19.3px;line-height:22px;height:22px;">Elimina linea</div></div>
<div class="abtn" style="left:70px;top:845px;"><div class="a" style="left:4px;top:16px;width:24px;height:24px;"><svg width="24" height="24" viewBox="0 0 24 24"><rect x="1.5" y="2.5" width="20" height="19" fill="#fff" stroke="#A8A8C0" stroke-width="1"/><rect x="2" y="9" width="19" height="6" fill="#F4A848"/><path d="M8 2.5 v19 M14.5 2.5 v19 M1.5 9 h20 M1.5 15 h20" stroke="#C0C0D8" stroke-width="1"/><rect x="11.5" y="12" width="10" height="10" fill="#fff" stroke="#3860B0" stroke-width="1.3"/><path d="M13.5 16 L16 19.5 L23 9" fill="none" stroke="#2050B0" stroke-width="2.2"/></svg></div><div class="lbl" style="left:32px;top:19px;font-size:19.3px;line-height:22px;height:22px;">Carica da DDT</div></div>
<div class="abtn" style="left:304px;top:845px;"><div class="a" style="left:4px;top:16px;width:24px;height:24px;"><svg width="24" height="24" viewBox="0 0 24 24"><path d="M8 3 Q18 1 21 4 Q22.5 7.5 18 7.5 L15 18 Q7 21 2 18 Q0.5 15 5 15 Z" fill="#E6EAF4" stroke="#9CA4C0" stroke-width="0.9"/><path d="M18 7.5 Q16 6 18 4.5 Q20 4.5 19.5 6" fill="#C8D0E4" stroke="#9CA4C0" stroke-width="0.7"/><path d="M5 15 Q8 16 7.5 18.5" fill="none" stroke="#9CA4C0" stroke-width="0.8"/><path d="M16.3 12.5 h3.4 v3.3 h3.3 v3.4 h-3.3 v3.3 h-3.4 v-3.3 h-3.3 v-3.4 h3.3z" fill="#5CD04C" stroke="#1E7A1E" stroke-width="1.1" stroke-linejoin="round"/></svg></div><div class="lbl" style="left:32px;top:19px;font-size:19.3px;line-height:22px;height:22px;">Lista rapida</div></div>
<div class="abtn" style="left:539px;top:845px;"><div class="a" style="left:4px;top:16px;width:24px;height:24px;"><svg width="24" height="24" viewBox="0 0 24 24"><path d="M11 1.5 l3 6.5 7.2 .8 -5.4 4.8 1.5 7 -6.3 -3.6 -6.2 3.6 1.4 -7 -5.4 -4.8 7.2 -.8z" fill="#FADC48" stroke="#D0A820" stroke-width="0.9" stroke-linejoin="round"/><path d="M16.3 12.5 h3.4 v3.3 h3.3 v3.4 h-3.3 v3.3 h-3.4 v-3.3 h-3.3 v-3.4 h3.3z" fill="#5CD04C" stroke="#1E7A1E" stroke-width="1.1" stroke-linejoin="round"/></svg></div><div class="lbl" style="left:32px;top:19px;font-size:19.3px;line-height:22px;height:22px;">Gruppi di inserimento</div></div>
<div class="abtn" style="left:70px;top:907px;"><div class="a" style="left:4px;top:16px;width:24px;height:24px;"><svg width="24" height="24" viewBox="0 0 24 24"><path d="M6 1 L11 11 Q6 13 1.5 11 Z" fill="#E8482C" stroke="#A82814" stroke-width="0.7"/><path d="M4.5 4 L6 1 L7 4Z" fill="#F8A088"/><path d="M12 4 Q18 3 20 8 L22.5 7.5 L19 13 L14.5 9.5 L17 9 Q15.5 6.5 12 7Z" fill="#48C848" stroke="#1E8A1E" stroke-width="0.7"/><path d="M11 21 Q5 21 4 16.5 L1.5 17 L5 12 L9.5 15.5 L7 16 Q8 18.5 11 18Z" fill="#48C848" stroke="#1E8A1E" stroke-width="0.7"/><path d="M13 14.5 L19 12.5 L23 14 L23 20.5 L17 23 L13 21Z" fill="#3878D0" stroke="#1C4898" stroke-width="0.7"/><path d="M13 14.5 L19 12.5 L23 14 L17 16.5Z" fill="#78B0F0"/></svg></div><div class="lbl" style="left:32px;top:19px;font-size:19.3px;line-height:22px;height:22px;">Sostituzione articolo</div></div>
<div class="abtn" style="left:539px;top:907px;"><div class="a" style="left:4px;top:16px;width:24px;height:24px;"><svg width="24" height="24" viewBox="0 0 24 24"><path d="M9 3 Q14 0 18 3 L17 7 L10 8Z" fill="#58C058" stroke="#2A8A2A" stroke-width="0.7"/><path d="M4 8 L19 6 L20 3.5 L22 3.5 L20 15 L7 17 Z" fill="#C8C4E8" stroke="#8884B0" stroke-width="1"/><path d="M8 8 v8 M12 7.5 v8.5 M16 7 v8.5 M5 11.5 h15" stroke="#A8A4D0" stroke-width="0.8"/><path d="M7 17 L6 20 L19 19" fill="none" stroke="#8884B0" stroke-width="1.2"/><circle cx="8" cy="21.5" r="2" fill="#909098" stroke="#585860"/><circle cx="17.5" cy="20.5" r="2" fill="#909098" stroke="#585860"/></svg></div><div class="lbl" style="left:32px;top:19px;font-size:19.3px;line-height:22px;height:22px;">Carrello</div></div>
<!-- totals -->
<div class="a" style="left:853px;top:757px;width:404px;height:176px;box-shadow:inset 1px 1px 0 #ACA899,inset -1px -1px 0 #fff;"></div>
<div class="lbl r" style="left:860px;top:767px;width:149px;">Totale corpo :</div>
<div class="sk" style="left:1011px;top:764px;width:141px;height:30px;"></div>
<div class="lbl r w" style="left:1020px;top:766px;width:130px;">1'002,00</div>
<div class="sk skg" style="left:1154px;top:764px;width:67px;height:30px;"></div>
<div class="lbl r" style="left:860px;top:800px;width:149px;">Spese di incasso :</div>
<div class="sk" style="left:1011px;top:797px;width:141px;height:30px;"></div>
<div class="lbl r w" style="left:1020px;top:799px;width:130px;">0,00</div>
<div class="lbl r" style="left:860px;top:833px;width:149px;">Spese spedizione :</div>
<div class="sk" style="left:1011px;top:830px;width:141px;height:30px;"></div>
<div class="lbl r w" style="left:1020px;top:832px;width:130px;">0,00</div>
<div class="sk skg" style="left:1154px;top:830px;width:67px;height:30px;"></div>
<div class="lbl" style="left:1155px;top:832px;">€</div>
<div class="lbl r" style="left:860px;top:866px;width:149px;">Totale imposte :</div>
<div class="sk" style="left:1011px;top:863px;width:141px;height:30px;"></div>
<div class="lbl r w" style="left:1020px;top:865px;width:130px;">200,40</div>
<div class="sk skg" style="left:1154px;top:863px;width:67px;height:30px;"></div>
<div class="lbl" style="left:1155px;top:865px;">€</div>
<div class="lbl r" style="left:860px;top:899px;width:149px;">Totale documento :</div>
<div class="sk" style="left:1011px;top:896px;width:141px;height:30px;"></div>
<div class="lbl r w" style="left:1020px;top:898px;width:130px;font-weight:bold;letter-spacing:0.6px;">1'202,40</div>
<div class="sk skg" style="left:1154px;top:896px;width:67px;height:30px;"></div>
<div class="lbl" style="left:1155px;top:898px;">€</div>
<div class="btn" style="left:1226px;top:763px;width:28px;height:31px;"><div class="lbl" style="left:0;width:27px;text-align:center;top:6px;font-size:14px;">?</div></div>
<div class="btn" style="left:1226px;top:895px;width:28px;height:31px;"><svg class="a" style="left:6px;top:7px" width="16" height="16" viewBox="0 0 16 16"><circle cx="6" cy="6" r="4.6" fill="#D8F4E0" stroke="#2FA86A" stroke-width="1.3"/><path d="M6 3.5 v5 M3.5 6 h5" stroke="#2FA84A" stroke-width="1.3"/><path d="M9.5 9.5 L14.5 14.5" stroke="#D89848" stroke-width="2.4" stroke-linecap="round"/></svg></div>
<div class="a" style="left:856px;top:937px;width:406px;height:43px;box-shadow:inset 1px 1px 0 #ACA899,inset -1px -1px 0 #fff;"></div>
<div class="lbl" style="left:880px;top:944px;">Peso lordo :</div>
<div class="sk" style="left:969px;top:939px;width:98px;height:35px;"></div>
<div class="lbl r w" style="left:975px;top:943px;width:88px;color:#9C9C96;">5,148</div>
<div class="lbl" style="left:1086px;top:944px;">Volume :</div>
<div class="sk" style="left:1152px;top:939px;width:80px;height:35px;"></div>
<div class="lbl r w" style="left:1160px;top:943px;width:67px;color:#9C9C96;">0</div>


</body>
</html>
